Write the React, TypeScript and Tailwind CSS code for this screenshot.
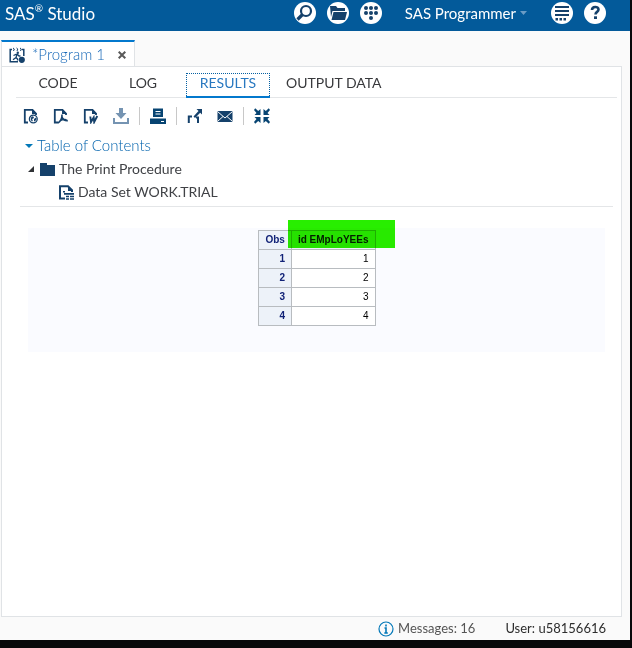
import type { ReactNode } from "react";

const NAVY = "#15416b";

function PageOutline() {
  return (
    <>
      <path d="M5 14.500H1.800V1.800H9.500L13 5.500V7" fill="none" stroke={NAVY} strokeWidth="1.800" />
      <path d="M9 1v5h5z" fill={NAVY} />
    </>
  );
}

function Toolbar() {
  return (
    <div className="flex h-4 items-center gap-[14px] pl-[7px]">
      <ToolButton label="Download as HTML">
        <PageOutline />
        <circle cx="10.300" cy="11" r="3.900" fill="#fff" stroke={NAVY} strokeWidth="1.300" />
        <path d="M8 9.500l1.500-1.300 1.500.8-.6 1.500-1.400.5.800 1.500-.8 1.200-1.200-2zM11 11l2-1.500.5 1.500-1.500 2.500-1-.5z" />
      </ToolButton>
      <ToolButton label="Download as PDF">
        <PageOutline />
        <path d="M5 15c2.300-1.200 4.300-4.800 4-8.500M9 9c.8 2.500 2.500 3.800 5.800 3.600M6.500 13c2-1.200 5-1.700 7-1.300" fill="none" stroke={NAVY} strokeWidth="1.600" />
      </ToolButton>
      <ToolButton label="Download as RTF">
        <PageOutline />
        <path d="M7.300 8.500l.7 5.500 2.700-4.500.5 4.500L14.300 8" fill="none" stroke={NAVY} strokeWidth="1.900" />
      </ToolButton>
      <ToolButton label="Download data" color="#7594b2">
        <path d="M6 0h4v5h3.500L8 11 2.500 5H6zM0 10h2v4h12v-4h2v6H0z" />
      </ToolButton>
      <Separator />
      <ToolButton label="Print" color="#074472">
        <path d="M3 0.500h10V9H3zM0 10.500h16V16H0z" />
        <path d="M5.500 3.500h5M5.500 6h5M11 13.500h3" stroke="#fff" strokeWidth="1" />
      </ToolButton>
      <Separator />
      <ToolButton label="Open in a new window">
        <path d="M9.500 1H15v5.500l-1.800-1.800L8 10 6.500 8.500 11.500 3z" />
        <path d="M1.800 15V8.500H5M9 9.500h2V15" fill="none" stroke={NAVY} strokeWidth="2" />
      </ToolButton>
      <ToolButton label="Email results">
        <path d="M0.500 3h15v11h-15z" />
        <path d="M0.500 3.500L8 10l7.500-6.500M0.500 13.500L6 8.500M15.500 13.500L10 8.500" fill="none" stroke="#fff" strokeWidth="1" />
      </ToolButton>
      <Separator />
      <ToolButton label="Exit maximized view" color="#074472">
        <path d="M1.200 0.200l3 2.800L6.500 1v6H0.500l2-2L0 2zM14.800 0.200l-3 2.800L9.500 1v6h6l-2-2L16 2zM1.200 15.800l3-2.800L6.500 15V9H0.500l2 2L0 14zM14.800 15.800l-3-2.800L9.500 15V9h6l-2 2L16 14z" />
      </ToolButton>
    </div>
  );
}

function ToolButton({ label, color = NAVY, children }: { label: string; color?: string; children: ReactNode }) {
  return (
    <button type="button" aria-label={label} className="size-4 shrink-0">
      <svg viewBox="0 0 16 16" fill={color} className="size-4">{children}</svg>
    </button>
  );
}

function Separator() {
  return <span className="-mx-1 h-[18px] w-px shrink-0 bg-[#c8c8c8]" />;
}

function RoundButton({ label, children }: { label: string; children: ReactNode }) {
  return (
    <button type="button" aria-label={label} className="size-[22px] shrink-0 rounded-full bg-white">
      <svg viewBox="0 0 22 22" fill={NAVY} className="size-[22px]">{children}</svg>
    </button>
  );
}

function Header() {
  return (
    <header className="flex h-[31px] items-start justify-between bg-[#035a9a] pt-[2px] pr-6 pl-[5px] text-white">
      <h1 className="text-[17px] leading-6">
        SAS<sup className="-top-2 text-[10px]">®</sup> Studio
      </h1>
      <div className="flex items-center">
        <div className="flex gap-[11px]">
          <RoundButton label="Search">
            <circle cx="12" cy="9" r="5" fill="#fff" stroke={NAVY} strokeWidth="2.200" />
            <path d="M8.500 12.500L3.500 17.500" stroke={NAVY} strokeWidth="3.200" />
          </RoundButton>
          <RoundButton label="Open">
            <path d="M3 4h6l1.500 2H18v3H5.500L4 15z" />
            <path d="M6.500 10H20l-2 8H4.500z" />
          </RoundButton>
          <RoundButton label="New options">
            {[6, 11, 16].map((x) => [6, 11].map((y) => <circle key={`${x}-${y}`} cx={x} cy={y} r="2" />))}
            <circle cx="11" cy="16" r="2" />
          </RoundButton>
        </div>
        <button type="button" className="ml-[23px] flex items-center gap-1 text-[15px] leading-[20px]">
          SAS Programmer
          <svg viewBox="0 0 7 4" className="w-[7px]" fill="#6b9cc5"><path d="M0 0h7L3.500 4z" /></svg>
        </button>
        <div className="ml-6 flex gap-[11px]">
          <RoundButton label="More application options">
            <path d="M4 4h14v2H4zM4 8h14v2H4zM4 12h14v2H4zM4.500 16h2.500v2.500H4.500zM8.500 16H11v2.500H8.500zM12.500 16H15v2.500h-2.500z" />
          </RoundButton>
          <RoundButton label="Help">
            <path d="M8 8c0-4 6.500-4 6.500-.5 0 2.500-3 2.300-3 5" fill="none" stroke={NAVY} strokeWidth="2.600" />
            <path d="M10 14.300h3v2.700h-3z" />
          </RoundButton>
        </div>
      </div>
    </header>
  );
}

function ProgramTab() {
  return (
    <div className="-mb-px flex h-[27px] w-[134px] items-center border-x border-t-2 border-x-[#e0e3e6] border-t-[#0378cd] bg-white pl-[7px]">
      <svg viewBox="0 0 16 16" className="mr-[7px] size-4 shrink-0" fill={NAVY}>
        <path d="M3 2.500H1.200v12.300H9M13 2.500h1.800V9" fill="none" stroke={NAVY} strokeWidth="1.500" />
        <path d="M4 1l1.300 1L4.500 4M7.500 1l1.300 1L8 4M11 1l1.300 1L11.500 4" fill="none" stroke={NAVY} strokeWidth="1" />
        <circle cx="8.800" cy="5.800" r="1.200" />
        <path d="M4.500 8.500l2.500-1h1.500L10 9h1.500M7.800 8l-.8 2.500 1.500 1.500v1.500M7 10.500L4 12.800" fill="none" stroke={NAVY} strokeWidth="1.300" />
        <circle cx="12.800" cy="12.800" r="3.100" />
      </svg>
      <span className="grow text-[15px] font-light whitespace-nowrap text-[#1668b8]">*Program 1</span>
      <button type="button" aria-label="Close tab" className="mr-2 shrink-0">
        <svg viewBox="0 0 8 8" className="size-2" stroke="#595959" strokeWidth="2"><path d="M.7.7l6.600 6.600M7.300.7L.7 7.300" /></svg>
      </button>
    </div>
  );
}

function ViewTabs() {
  return (
    <nav className="flex h-[25px] items-start border-b border-[#e4e6e8] text-sm leading-5 text-[#38393c]">
      <button type="button" className="w-[84px]">CODE</button>
      <button type="button" className="w-[86px]">LOG</button>
      <button type="button" className="h-[25px] w-[84px] border-b-2 border-[#0378cd] text-[#2878c0]">
        <span className="block h-[23px] border border-b-0 border-dotted border-[#0561a3] leading-[18px]">RESULTS</span>
      </button>
      <button type="button" className="ml-4">OUTPUT DATA</button>
    </nav>
  );
}

function Contents() {
  return (
    <section className="ml-1 border-b border-[#e4e6e8] text-sm leading-[23px] text-[#404246]">
      <button type="button" className="flex items-center gap-1 pl-[5px] text-[15px] font-light text-[#0062ad]">
        <svg viewBox="0 0 8 4" className="w-2" fill="#0378b8"><path d="M0 0h8L4 4z" /></svg>
        Table of Contents
      </button>
      <div className="flex items-center pl-2">
        <svg viewBox="0 0 6 6" className="mr-[6px] w-[6px]" fill="#303236"><path d="M6 0v6H0z" /></svg>
        <svg viewBox="0 0 15 14" className="mr-1 w-[15px]" fill={NAVY}><path d="M0 1h7v2h8v11H0z" /></svg>
        The Print Procedure
      </div>
      <div className="flex items-center pb-[2px] pl-[39px] leading-6">
        <svg viewBox="0 0 15 15" className="mr-1 w-[15px]">
          <path d="M6 13.500H1V1.200h8l4 4V7" fill="none" stroke={NAVY} strokeWidth="2" />
          <path d="M9 1v5h5zM4 6h2v1.500H4zM5 8h10v1.700H5zM7 10.700h3v1.500H7zM11 10.700h4v1.500h-4zM7 13.200h3v1.500H7zM11 13.200h4v1.500h-4z" fill={NAVY} />
        </svg>
        Data Set WORK.TRIAL
      </div>
    </section>
  );
}

function Results() {
  const cell = "h-[19px] border border-[#b8bcc0] px-[6px] py-0 text-right";
  return (
    <section className="mt-[21px] mr-2 ml-3 h-[124px] bg-[#fafbff] pt-[2px]">
      <div className="relative mx-auto w-[118px]">
        <table className="w-full border-collapse bg-white font-['Liberation_Sans',Arial,sans-serif] text-[10px] leading-[14px] text-black">
          <thead>
            <tr className="bg-[#edf2f9] text-[#112277]">
              <th scope="col" className={`${cell} w-[34px]`}>Obs</th>
              <th scope="col" className={`${cell} whitespace-nowrap`}>id EMpLoYEEs</th>
            </tr>
          </thead>
          <tbody>
            {[1, 2, 3, 4].map((n) => (
              <tr key={n}>
                <th scope="row" className={`${cell} bg-[#edf2f9] text-[#112277]`}>{n}</th>
                <td className={cell}>{n}</td>
              </tr>
            ))}
          </tbody>
        </table>
        <div className="absolute -top-[10px] left-[30px] h-7 w-[107px] bg-[#28ee00] mix-blend-multiply" />
      </div>
    </section>
  );
}

export default function App() {
  return (
    <div className="flex min-h-screen flex-col border-r-2 border-b-8 border-[#08080a] bg-[#fafafa] font-['Lato',sans-serif]">
      <Header />
      <main className="mr-2 ml-px flex grow flex-col pt-[9px]">
        <ProgramTab />
        <div className="grow border border-[#e0e3e6] bg-white pt-[6px] pr-2 pl-[14px]">
          <div className="-mr-1">
            <ViewTabs />
          </div>
          <div className="pt-[10px] pb-[10px]">
            <Toolbar />
          </div>
          <Contents />
          <Results />
        </div>
      </main>
      <footer className="flex h-[23px] items-center justify-end gap-[30px] pr-6 text-[13px] text-[#2d2d2d]">
        <span className="flex items-center gap-1 text-[#555]">
          <svg viewBox="0 0 16 16" className="size-4" fill="none" stroke="#0378b8">
            <circle cx="8" cy="8" r="7" strokeWidth="1.200" />
            <path d="M8 3.500v2M6.500 7H8v5M6.300 12h3.500" strokeWidth="1.600" />
          </svg>
          Messages: 16
        </span>
        <span>User: u58156616</span>
      </footer>
    </div>
  );
}
